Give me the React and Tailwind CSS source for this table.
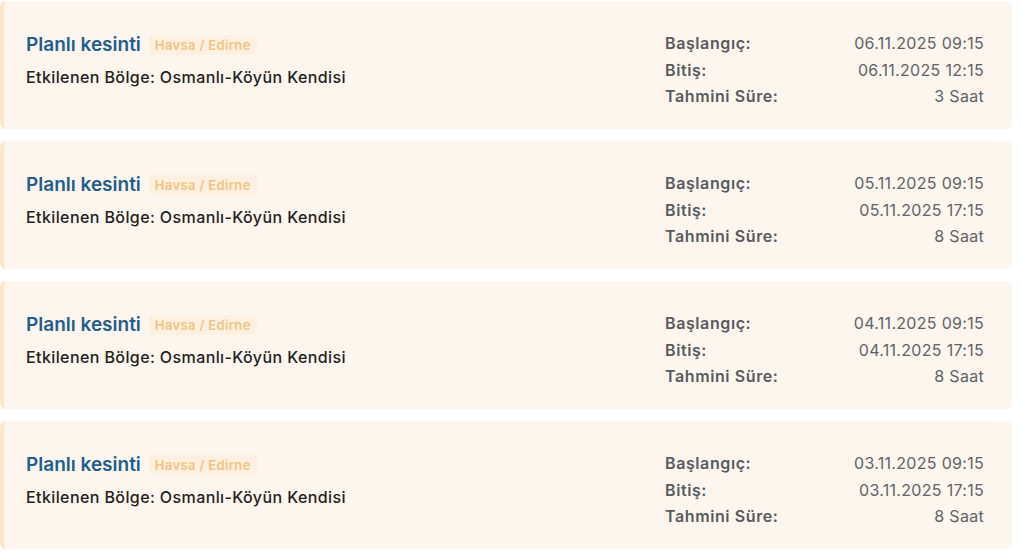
import React from 'react'

const outages = [
  { date: '06.11.2025', start: '09:15', end: '12:15', duration: '3 Saat' },
  { date: '05.11.2025', start: '09:15', end: '17:15', duration: '8 Saat' },
  { date: '04.11.2025', start: '09:15', end: '17:15', duration: '8 Saat' },
  { date: '03.11.2025', start: '09:15', end: '17:15', duration: '8 Saat' },
]

const OutageCard = ({ item }) => {
  return (
    <div className="h-[128px] flex justify-between bg-[#fdf6ee] border-l-4 border-[#fde6c9] rounded-md pl-[22px] pr-[28px] pt-[31px]">
      <div>
        <div className="flex items-center gap-[8px]">
          <p className="text-[19px] font-semibold text-[#1e5e91] leading-[26px]">Planlı kesinti</p>
          <span className="text-[13px] font-semibold text-[#f2c47f] bg-[#fcf0e0] rounded px-[6px] leading-[20px] tracking-[0.35px]">Havsa / Edirne</span>
        </div>
        <p className="mt-[8px] text-[16px] font-medium text-[#222222] leading-[22px] tracking-[0.4px]">
          Etkilenen Bölge: Osmanlı-Köyün Kendisi
        </p>
      </div>
      <div className="w-[319px] -mt-[2px] text-[16px] leading-[26.5px]">
        <div className="flex justify-between">
          <span className="font-semibold text-[#575b60] tracking-[0.6px]">Başlangıç:</span>
          <span className="text-[#5f6368] tracking-[0.3px]">{item.date} {item.start}</span>
        </div>
        <div className="flex justify-between">
          <span className="font-semibold text-[#575b60] tracking-[0.6px]">Bitiş:</span>
          <span className="text-[#5f6368] tracking-[0.3px]">{item.date} {item.end}</span>
        </div>
        <div className="flex justify-between">
          <span className="font-semibold text-[#575b60] tracking-[0.6px]">Tahmini Süre:</span>
          <span className="text-[#5f6368] tracking-[0.3px]">{item.duration}</span>
        </div>
      </div>
    </div>
  )
}

const App = () => {
  return (
    <div className="bg-white min-h-screen pr-[10px] pt-[1px] flex flex-col gap-[12px]" style={{ fontFamily: 'Inter, "Noto Sans", sans-serif' }}>
      {outages.map((item, idx) => (
        <OutageCard key={idx} item={item} />
      ))}
    </div>
  )
}

export default App
